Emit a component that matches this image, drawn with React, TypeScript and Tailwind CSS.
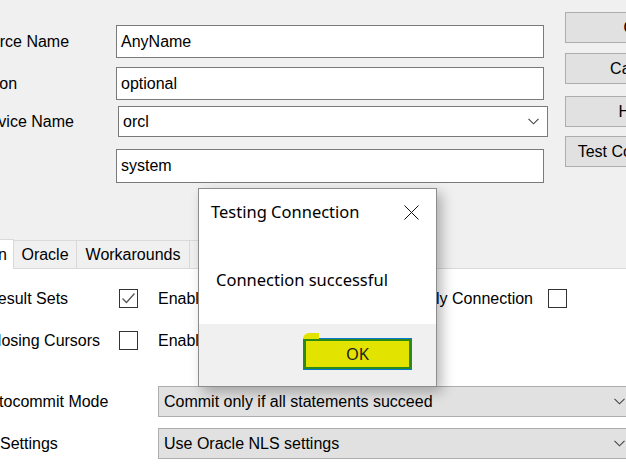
import React from "react";

function Chevron() {
  return (
    <svg width="11" height="7" viewBox="0 0 11 7" className="shrink-0">
      <polyline points="0.5,0.8 5.5,5.8 10.5,0.8" fill="none" stroke="#444" strokeWidth="1.1" />
    </svg>
  );
}

function Checkbox({ checked }: { checked?: boolean }) {
  return (
    <div className="w-[19px] h-[19px] shrink-0 border border-[#333] bg-white flex items-center justify-center">
      {checked && (
        <svg width="17" height="17" viewBox="0 0 17 17">
          <polyline points="2.5,8.5 6.5,12.5 14.5,3.5" fill="none" stroke="#555" strokeWidth="1.3" />
        </svg>
      )}
    </div>
  );
}

function SideButton({ label, mt, h }: { label: string; mt: string; h: string }) {
  return (
    <div
      className={`${mt} ${h} w-[140px] shrink-0 bg-[#e1e1e1] border border-[#adadad] flex items-center justify-center text-black whitespace-nowrap`}
    >
      {label}
    </div>
  );
}

export default function App() {
  return (
    <div className="relative w-[626px] h-[467px] overflow-hidden bg-[#f0f0f0] font-['Liberation_Sans',Arial,sans-serif] text-[16px] text-black flex flex-col">
      {/* top section */}
      <div className="flex pt-[12px] shrink-0">
        <div className="mt-[13px] w-[565px] shrink-0 flex flex-col">
          <div className="flex items-center h-[33px]">
            <div className="ml-[-67px] w-[183px] shrink-0 whitespace-nowrap">Data Source Name</div>
            <div className="w-[428px] h-[33px] bg-white border border-[#7a7a7a] px-[4px] flex items-center">AnyName</div>
          </div>
          <div className="flex items-center h-[33px] mt-[9px]">
            <div className="ml-[-63px] w-[179px] shrink-0 whitespace-nowrap">Description</div>
            <div className="w-[428px] h-[33px] bg-white border border-[#7a7a7a] px-[4px] flex items-center">optional</div>
          </div>
          <div className="flex items-center h-[31px] mt-[6px]">
            <div className="ml-[-63px] w-[181px] shrink-0 whitespace-nowrap">TNS Service Name</div>
            <div className="w-[430px] h-[31px] bg-white border border-[#7a7a7a] pl-[4px] pr-[8px] flex items-center justify-between">
              <span>orcl</span>
              <Chevron />
            </div>
          </div>
          <div className="flex items-center h-[34px] mt-[12px]">
            <div className="ml-[-63px] w-[179px] shrink-0 whitespace-nowrap">User ID</div>
            <div className="w-[428px] h-[34px] bg-white border border-[#7a7a7a] px-[4px] flex items-center">system</div>
          </div>
        </div>
        <div className="flex flex-col shrink-0">
          <SideButton label="OK" mt="mt-0" h="h-[31px]" />
          <SideButton label="Cancel" mt="mt-[10px]" h="h-[31px]" />
          <SideButton label="Help" mt="mt-[12px]" h="h-[31px]" />
          <SideButton label="Test Connection" mt="mt-[9px]" h="h-[31px]" />
        </div>
      </div>

      {/* tabs */}
      <div className="mt-[55px] ml-[-78px] flex items-end h-[30px] shrink-0">
        <div className="h-[30px] w-[92px] bg-white border-t border-r border-[#d9d9d9] flex items-center justify-end pr-[6px] whitespace-nowrap relative top-[1px]">
          Application
        </div>
        <div className="h-[28px] w-[63px] border-t border-r border-[#d9d9d9] flex items-center justify-center whitespace-nowrap pt-[1px]">Oracle</div>
        <div className="h-[28px] w-[113px] border-t border-r border-[#d9d9d9] flex items-center justify-center whitespace-nowrap pt-[1px]">Workarounds</div>
        <div className="h-[28px] w-[170px] border-t border-r border-[#d9d9d9] flex items-center justify-center whitespace-nowrap">SQLServer Migration</div>
      </div>

      {/* tab panel */}
      <div className="flex-1 bg-white border-t border-[#d9d9d9] flex flex-col">
        <div className="flex items-center h-[19px] mt-[20px]">
          <div className="ml-[-68px] w-[187px] shrink-0 whitespace-nowrap">Enable Result Sets</div>
          <Checkbox checked />
          <div className="ml-[20px] w-[170px] shrink-0 whitespace-nowrap">Enable Query Timeout</div>
          <Checkbox checked />
          <div className="w-[186px] shrink-0 text-right whitespace-nowrap">Read-Only Connection</div>
          <div className="ml-[15px]">
            <Checkbox />
          </div>
        </div>
        <div className="flex items-center h-[19px] mt-[23px]">
          <div className="ml-[-68px] w-[187px] shrink-0 whitespace-nowrap">Enable Closing Cursors</div>
          <Checkbox />
          <div className="ml-[20px] w-[170px] shrink-0 whitespace-nowrap">Enable Thread Safety</div>
          <Checkbox checked />
        </div>
        <div className="flex items-center h-[31px] mt-[36px]">
          <div className="ml-[-65px] w-[223px] shrink-0 whitespace-nowrap">Batch Autocommit Mode</div>
          <div className="w-[476px] h-[31px] shrink-0 bg-[#e1e1e1] border border-[#adadad] pl-[5px] pr-[8px] flex items-center justify-between whitespace-nowrap">
            <span>Commit only if all statements succeed</span>
            <Chevron />
          </div>
        </div>
        <div className="flex items-center h-[31px] mt-[11px]">
          <div className="ml-[-64px] w-[222px] shrink-0 whitespace-nowrap">Numeric Settings</div>
          <div className="w-[476px] h-[31px] shrink-0 bg-[#e1e1e1] border border-[#adadad] pl-[5px] pr-[8px] flex items-center justify-between whitespace-nowrap">
            <span>Use Oracle NLS settings</span>
            <Chevron />
          </div>
        </div>
      </div>

      {/* message box */}
      <div className="absolute left-[198px] top-[188px] w-[239px] h-[199px] bg-white border border-[#8c8c8c] shadow-[5px_5px_12px_rgba(0,0,0,0.28)] flex flex-col font-['Noto_Sans',sans-serif] text-[16.5px]">
        <div className="h-[47px] pl-[12px] pr-[17px] flex items-center justify-between shrink-0">
          <span className="whitespace-nowrap">Testing Connection</span>
          <svg width="15" height="15" viewBox="0 0 15 15">
            <line x1="0.5" y1="0.5" x2="14.5" y2="14.5" stroke="#111" strokeWidth="1" />
            <line x1="14.5" y1="0.5" x2="0.5" y2="14.5" stroke="#111" strokeWidth="1" />
          </svg>
        </div>
        <div className="h-[88px] pl-[17px] flex items-center shrink-0 whitespace-nowrap">Connection successful</div>
        <div className="flex-1 bg-[#f0f0f0] flex justify-end pr-[24px] pt-[14px]">
          <div className="relative w-[109px] h-[32px] border border-[#0a78d7]">
            <div className="absolute left-[-1px] top-[-6px] w-[16px] h-[6px] bg-[#e2e400] rounded-tl-[6px]" />
            <div className="w-full h-full border-2 border-[#2d8a16] bg-[#e2e400] flex items-center justify-center text-[#222]">
              OK
            </div>
          </div>
        </div>
      </div>
    </div>
  );
}
